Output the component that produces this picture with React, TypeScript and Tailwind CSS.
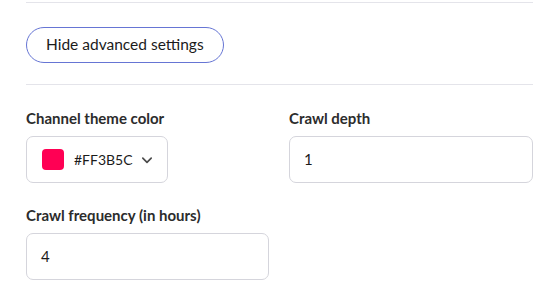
import * as React from 'react'

// ─── Field label ──────────────────────────────────────────────────────────────

function Label({ children }: { children: React.ReactNode }) {
  return (
    <p className="text-[15px] leading-[18px] font-bold text-[#2c2c2c] mb-[9px]">
      {children}
    </p>
  )
}

function TextField({ value }: { value: string }) {
  return (
    <div className="h-[47px] rounded-[7px] border border-[#d5d5dc] bg-white flex items-center px-[14px] text-[15px] text-[#1b1b1b]">
      {value}
    </div>
  )
}

export default function App() {
  return (
    <div
      className="w-[559px] h-[291px] bg-white overflow-hidden"
      style={{ fontFamily: 'Lato, "Open Sans", sans-serif' }}
    >
      <div className="w-[507px] ml-[26px] pt-[2px]">
        <div className="h-px bg-[#e4e4ea]" />

        <div className="pt-[24px] pb-[21px]">
          <button className="h-[36px] px-[19px] rounded-full border border-[#6675d4] text-[15.5px] text-[#1b1b1b] bg-white">
            Hide advanced settings
          </button>
        </div>

        <div className="h-px bg-[#e4e4ea]" />

        <div className="grid grid-cols-[243px_244px] gap-x-[20px] pt-[24px]">
          <div>
            <Label>Channel theme color</Label>
            <div className="inline-flex items-center h-[47px] w-[142px] rounded-[7px] border border-[#d5d5dc] bg-white pl-[15px]">
              <span className="w-[22px] h-[21px] rounded-[4px] bg-[#ff0054]" />
              <span className="ml-[10px] text-[14px] text-[#1b1b1b]">#FF3B5C</span>
              <svg
                className="ml-[8px]"
                width="12"
                height="12"
                viewBox="0 0 10 10"
                fill="none"
                stroke="#4b4b4b"
                strokeWidth="1.4"
                strokeLinecap="round"
                strokeLinejoin="round"
              >
                <path d="M1.5 3.5 L5 7 L8.5 3.5" />
              </svg>
            </div>
          </div>
          <div>
            <Label>Crawl depth</Label>
            <TextField value="1" />
          </div>
          <div className="pt-[23px]">
            <Label>Crawl frequency (in hours)</Label>
            <TextField value="4" />
          </div>
        </div>
      </div>
    </div>
  )
}
